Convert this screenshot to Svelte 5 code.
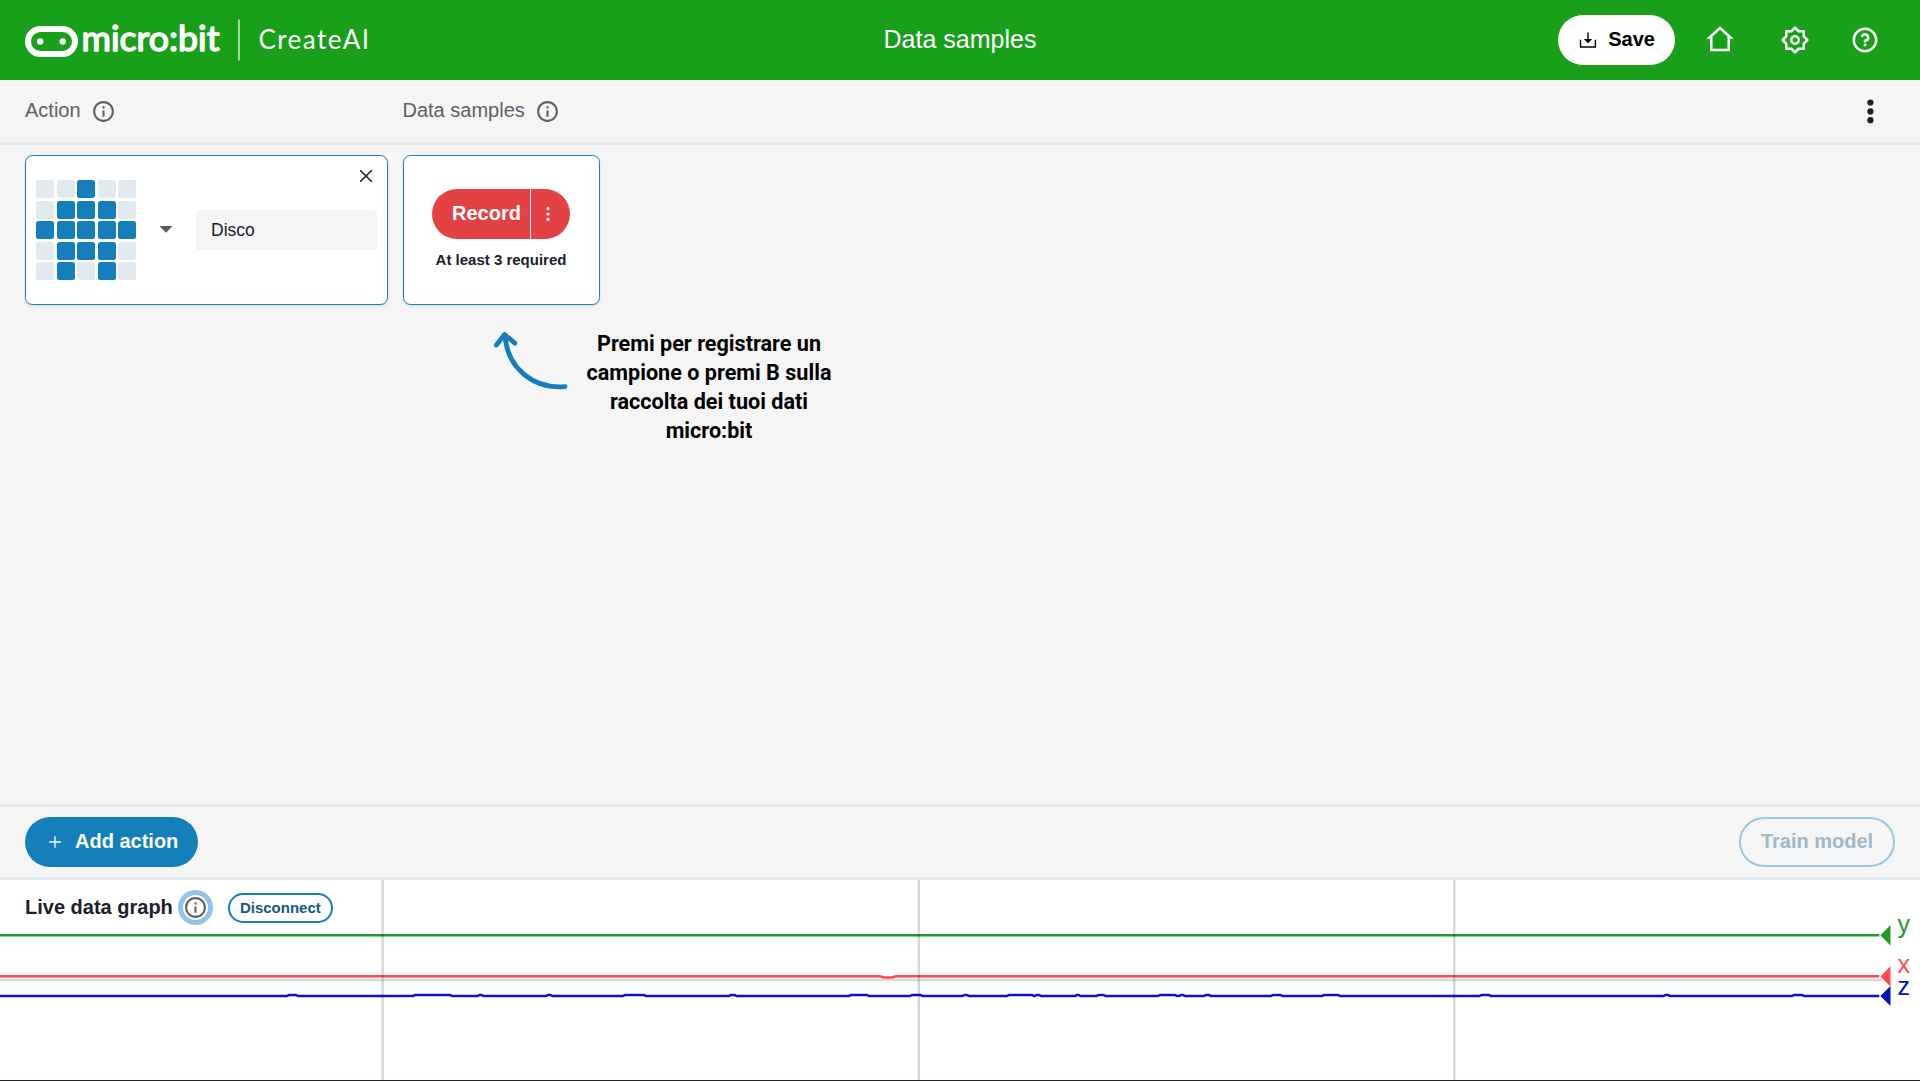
<script>
  const leds = ['00100', '01110', '11111', '01110', '01010'].join('').split('');

  // Spans where the z reading rises slightly above its resting level.
  const zBumps = [
    [288, 297], [414, 451], [478.5, 482.5], [547, 551.5], [624, 645], [730, 735.5],
    [850, 868], [911, 921.5], [963.5, 968], [1008, 1033], [1035.5, 1040], [1076, 1079.5],
    [1097.5, 1104.5], [1159, 1176], [1180, 1184], [1205, 1210], [1272, 1281.5],
    [1323, 1339], [1480.5, 1490], [1664.5, 1669], [1793, 1803]
  ];
  const zPath =
    'M0 116.1' +
    zBumps.map(([a, b]) => `H${a - 1}L${a + 1} 114.9H${b - 1}L${b + 1} 116.1`).join('') +
    'H1879.3';

  const icons = {
    info: 'M12 22C6.477 22 2 17.523 2 12S6.477 2 12 2s10 4.477 10 10-4.477 10-10 10zm0-2a8 8 0 1 0 0-16 8 8 0 0 0 0 16zM11 7h2v2h-2V7zm0 4h2v6h-2v-6z',
    home: 'M19 21H5a1 1 0 0 1-1-1v-9H1l10.327-9.388a1 1 0 0 1 1.346 0L23 11h-3v9a1 1 0 0 1-1 1zM6 19h12V9.157l-6-5.454-6 5.454V19z',
    settings: 'M8.686 4l2.607-2.607a1 1 0 0 1 1.414 0L15.314 4H19a1 1 0 0 1 1 1v3.686l2.607 2.607a1 1 0 0 1 0 1.414L20 15.314V19a1 1 0 0 1-1 1h-3.686l-2.607 2.607a1 1 0 0 1-1.414 0L8.686 20H5a1 1 0 0 1-1-1v-3.686l-2.607-2.607a1 1 0 0 1 0-1.414L4 8.686V5a1 1 0 0 1 1-1h3.686zM6 6v3.515L3.515 12 6 14.485V18h3.515L12 20.485 14.485 18H18v-3.515L20.485 12 18 9.515V6h-3.515L12 3.515 9.515 6H6zm6 10a4 4 0 1 1 0-8 4 4 0 0 1 0 8zm0-2a2 2 0 1 0 0-4 2 2 0 0 0 0 4z',
    help: 'M12 22C6.477 22 2 17.523 2 12S6.477 2 12 2s10 4.477 10 10-4.477 10-10 10zm0-2a8 8 0 1 0 0-16 8 8 0 0 0 0 16zm-1-5h2v2h-2v-2zm2-1.645V14h-2v-1.5a1 1 0 0 1 1-1 1.5 1.5 0 1 0-1.471-1.794l-1.962-.393A3.501 3.501 0 1 1 13 13.355z'
  };
</script>

{#snippet icon(path, size)}
  <svg class="icon" width={size} height={size} viewBox="0 0 24 24" fill="currentColor" aria-hidden="true">
    <path d={path} />
  </svg>
{/snippet}

<div class="app">
  <header class="topbar">
    <div class="side">
      <svg class="logo" width="350" height="80" viewBox="25 0 350 80" role="img" aria-label="micro:bit CreateAI">
        <rect x="28" y="29" width="47" height="25" rx="12.5" fill="none" stroke="#fff" stroke-width="6" />
        <circle cx="40.2" cy="41.5" r="3.2" fill="#fff" />
        <circle cx="62.7" cy="41.5" r="3.2" fill="#fff" />
        <text class="brand" x="81.5" y="50.5" textLength="138" lengthAdjust="spacingAndGlyphs">micro:bit</text>
        <rect x="238" y="19.5" width="2" height="41" fill="#fff" opacity=".6" />
        <text class="product" x="258.5" y="49" textLength="110.5" lengthAdjust="spacing">CreateAI</text>
      </svg>
    </div>
    <h1>Data samples</h1>
    <div class="side tools">
      <button class="btn save">
        <svg width="20" height="20" viewBox="0 0 20 20" aria-hidden="true">
          <path d="M2.5 9.8V17H17.4V9.8" fill="none" stroke="#000" stroke-width="1.4" />
          <path d="M10 2.6V10" stroke="#000" stroke-width="1.4" />
          <path d="M5.8 8.9H14.2L10 13.3Z" />
        </svg>
        <span>Save</span>
      </button>
      <button class="tool home" aria-label="Home">{@render icon(icons.home, 30)}</button>
      <button class="tool gear" aria-label="Settings">{@render icon(icons.settings, 30)}</button>
      <button class="tool" aria-label="Help">{@render icon(icons.help, 30)}</button>
    </div>
  </header>

  <div class="headings">
    <div class="heading first"><span>Action</span>{@render icon(icons.info, 25)}</div>
    <div class="heading"><span>Data samples</span>{@render icon(icons.info, 25)}</div>
    <button class="tool more" aria-label="More">
      <svg width="30" height="30" viewBox="0 0 30 30" fill="#1a202c" aria-hidden="true">
        <circle cx="15.4" cy="6.5" r="3.1" /><circle cx="15.4" cy="15.4" r="3.1" /><circle cx="15.4" cy="24.2" r="3.1" />
      </svg>
    </button>
  </div>

  <main>
    <div class="row">
      <section class="card action">
        <div class="leds">
          {#each leds as led}<i class:on={led === '1'}></i>{/each}
        </div>
        <svg class="caret" width="14" height="7" viewBox="0 0 14 7" aria-hidden="true">
          <path d="M.5 0H13.5L7 6.8Z" fill="#5a5a5a" />
        </svg>
        <div class="name">Disco</div>
        <button class="close" aria-label="Delete action">
          <svg width="14" height="14" viewBox="0 0 14 14" aria-hidden="true">
            <path d="M1.2 1.2L12.8 12.8M12.8 1.2L1.2 12.8" stroke="#1a202c" stroke-width="1.6" />
          </svg>
        </button>
      </section>
      <section class="card samples">
        <div class="record">
          <button class="btn rec"><span>Record</span></button>
          <button class="btn opts" aria-label="Recording options">
            <svg width="6" height="16" viewBox="0 0 6 16" fill="#fff" aria-hidden="true">
              <circle cx="3" cy="2.6" r="1.6" /><circle cx="3" cy="8" r="1.6" /><circle cx="3" cy="13.4" r="1.6" />
            </svg>
          </button>
        </div>
        <p class="need">At least 3 required</p>
      </section>
    </div>
    <div class="hint">
      <svg width="76" height="62" viewBox="493 330 76 62" fill="none" stroke="#147fba" stroke-width="4.8" stroke-linecap="round" stroke-linejoin="round" aria-hidden="true">
        <path d="M505 335C507 368 533 389 565 386.6" />
        <path d="M496.4 345L504.6 334.6L514.8 343.2" />
      </svg>
      <p>Premi per registrare un<br />campione o premi B sulla<br />raccolta dei tuoi dati<br />micro:bit</p>
    </div>
  </main>

  <div class="actions">
    <button class="btn add">
      <svg width="20" height="20" viewBox="0 0 24 24" fill="#fff" aria-hidden="true">
        <path d="M11.2 11.2V5h1.6v6.2H19v1.6h-6.2V19h-1.6v-6.2H5v-1.6z" />
      </svg>
      <span>Add action</span>
    </button>
    <button class="btn train"><span>Train model</span></button>
  </div>

  <section class="graph">
    <svg class="plot" width="1920" height="200" viewBox="0 0 1920 200" aria-hidden="true">
      <g fill="none" stroke-width="2.5">
        <path d="M0 100H1882" stroke="#d8d8d8" />
        <path d="M0 55.2H1879.3" stroke="#229b26" />
        <path d="M0 96.3H880L884 97.5H892L896 96.3H1879.3" stroke="#ff4b4f" />
        <path d={zPath} stroke="#0a14c4" />
        <path d="M382.6 0V200M918.8 0V200M1454.2 0V200" stroke="#000" stroke-opacity=".16" />
      </g>
      <path d="M1880.4 55.2L1890.5 45V65.4Z" fill="#229b26" />
      <path d="M1880.4 96.4L1890.5 86.2V106.6Z" fill="#ff4b4f" />
      <path d="M1880.4 116L1890.5 106V126Z" fill="#0012b8" />
      <text x="1897.5" y="53" fill="#229b26">y</text>
      <text x="1897.5" y="93" fill="#ff4b4f">x</text>
      <text x="1897.5" y="114.6" fill="#0012b8">z</text>
    </svg>
    <div class="live">
      <h2>Live data graph</h2>
      <span class="focus">{@render icon(icons.info, 25)}</span>
      <button class="disconnect">Disconnect</button>
    </div>
  </section>
</div>

<style>
  :global(body) {
    margin: 0;
    background: #f5f5f5;
  }
  .app {
    box-sizing: border-box;
    width: 1920px;
    height: 1081px;
    display: flex;
    flex-direction: column;
    overflow: hidden;
    background: #f5f5f5;
    border-bottom: 1px solid #1f2530;
    color: #1a202c;
    font-family: 'Liberation Sans', Arial, sans-serif;
    font-size: 20px;
  }
  button {
    border: 0;
    margin: 0;
    padding: 0;
    background: none;
    color: inherit;
    font: inherit;
  }
  h1, h2, p {
    margin: 0;
  }
  svg {
    display: block;
    flex: none;
  }
  .topbar {
    height: 80px;
    flex: none;
    display: grid;
    grid-template-columns: 1fr auto 1fr;
    align-items: center;
    background: #18a01a;
    color: #fff;
  }
  .side {
    display: flex;
    align-items: center;
    padding-left: 25px;
  }
  .brand {
    font: 400 35px Lato, sans-serif;
    fill: #fff;
    stroke: #fff;
    stroke-width: 1.5px;
    stroke-linejoin: round;
  }
  .product {
    font: 400 26px Lato, sans-serif;
    fill: #fff;
  }
  h1 {
    font-size: 25px;
    font-weight: 400;
    padding-bottom: 1px;
  }
  .tools {
    justify-content: flex-end;
    padding: 0 40px 0 0;
  }
  .home {
    margin: 0 45px 0 30px;
  }
  .gear {
    margin-right: 40px;
  }
  .btn {
    height: 50px;
    display: flex;
    align-items: center;
    border-radius: 25px;
    padding: 0 20px;
    font-weight: 700;
    box-sizing: border-box;
    white-space: nowrap;
  }
  .btn span,
  .heading span {
    padding-bottom: 2px;
  }
  .save,
  .add {
    gap: 10px;
  }
  .save {
    background: #fff;
    color: #000;
  }
  .headings {
    height: 65px;
    flex: none;
    box-sizing: border-box;
    display: flex;
    align-items: center;
    padding: 0 35px 0 25px;
    border-bottom: 3px solid #e2e8f0;
  }
  .heading {
    display: flex;
    align-items: center;
    gap: 10px;
    color: #5c606a;
  }
  .first {
    width: 377.5px;
  }
  .more {
    margin-left: auto;
  }
  main {
    flex: 1;
    padding: 10px 25px 0;
  }
  .row {
    display: flex;
    gap: 15px;
  }
  .card {
    box-sizing: border-box;
    height: 150px;
    display: flex;
    background: #fff;
    border: 1px solid #147fba;
    border-radius: 7.5px;
    box-shadow: 0 1px 3px rgba(0, 0, 0, 0.12);
  }
  .action {
    width: 363px;
    align-items: center;
    padding: 0 10px;
    position: relative;
  }
  .leds {
    display: grid;
    grid-template-columns: repeat(5, 18px);
    grid-auto-rows: 18px;
    gap: 2.5px;
  }
  .leds i {
    background: #e2e8f0;
    border-radius: 2.5px;
  }
  .leds .on {
    background: #147fba;
  }
  .caret {
    margin: 0 23px 1px;
  }
  .name {
    flex: 1;
    height: 40px;
    line-height: 40px;
    padding-left: 15px;
    background: #f5f5f5;
    border-radius: 2.5px;
    font-size: 17.5px;
  }
  .close {
    position: absolute;
    top: 13px;
    right: 14px;
  }
  .samples {
    width: 197px;
    flex-direction: column;
    align-items: center;
    padding: 33px 1px 0 0;
  }
  .record {
    display: flex;
    gap: 1px;
  }
  .rec {
    width: 98px;
    padding: 0 0 0 20px;
    background: #e44144;
    color: #fff;
    border-radius: 25px 0 0 25px;
  }
  .opts {
    width: 39px;
    padding: 0 0 0 14px;
    background: #e44144;
    border-radius: 0 25px 25px 0;
  }
  .need {
    margin-top: 12px;
    font-size: 15px;
    font-weight: 700;
    line-height: 18px;
  }
  .hint {
    display: flex;
    align-items: flex-start;
    padding: 24px 0 0 468px;
  }
  .hint svg {
    margin-top: 1px;
  }
  .hint p {
    width: 280px;
    text-align: center;
    color: #000;
    font: 700 21.6px/29px Roboto, sans-serif;
  }
  .actions {
    height: 76px;
    flex: none;
    box-sizing: border-box;
    display: flex;
    align-items: center;
    justify-content: space-between;
    padding: 0 25px;
    border-top: 3px solid #e2e8f0;
    border-bottom: 3px solid #e2e8f0;
  }
  .add {
    background: #147fba;
    color: #fff;
  }
  .train {
    width: 156px;
    justify-content: center;
    border: 2px solid #9bc6df;
    color: #9fb9c8;
  }
  .graph {
    height: 200px;
    flex: none;
    background: #fff;
    display: grid;
  }
  .plot,
  .live {
    grid-area: 1 / 1;
  }
  .plot text {
    font-size: 25px;
  }
  .live {
    display: flex;
    align-items: center;
    align-self: start;
    padding: 13px 0 0 25px;
    z-index: 1;
  }
  h2 {
    font-size: 20px;
    padding-bottom: 2px;
  }
  .focus {
    margin: 0 20px 1px 10px;
    border-radius: 50%;
    box-shadow: 0 0 0 5px #92c4ee;
    color: #5e6066;
  }
  .disconnect {
    height: 30px;
    width: 105px;
    box-sizing: border-box;
    border: 2px solid #147fba;
    border-radius: 15px;
    padding-bottom: 2px;
    background: #fff;
    color: #17567d;
    font-size: 15px;
    font-weight: 700;
  }
</style>
